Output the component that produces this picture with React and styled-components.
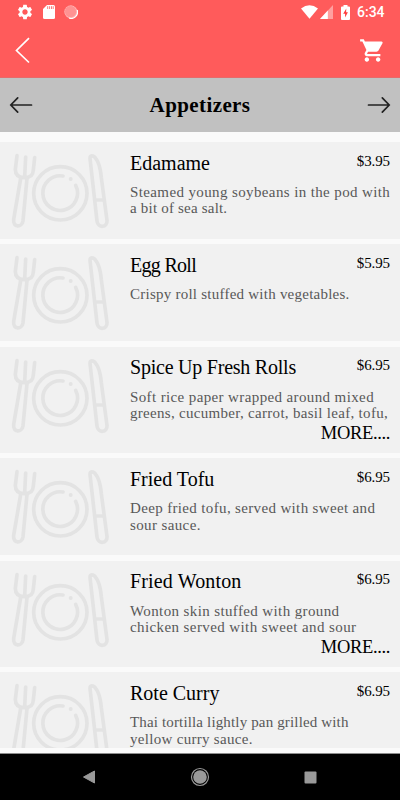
import styled, { createGlobalStyle } from 'styled-components';
import { MdSettings, MdShoppingCart } from 'react-icons/md';

const GlobalStyle = createGlobalStyle`
  * {
    box-sizing: border-box;
  }

  body {
    margin: 0;
    background: #fafafa;
    font-family: 'Liberation Serif', serif;
    color: #000;
  }
`;

const Screen = styled.div`
  display: flex;
  flex-direction: column;
  width: 400px;
  height: 800px;
  overflow: hidden;
`;

const Header = styled.header`
  display: flex;
  flex-direction: column;
  height: 78px;
  background-color: #ff5b5b;
  color: #fff;
  border-bottom: 1px solid #e66a6a;
`;

const StatusBar = styled.div`
  display: flex;
  justify-content: space-between;
  height: 24px;
  padding: 0 16px;
`;

const StatusGroup = styled.div`
  display: flex;
  align-items: center;
  gap: ${(props) => props.$gap}px;
`;

const Clock = styled.span`
  width: 27px;
  margin-left: -1px;
  font-family: Roboto, sans-serif;
  font-size: 14px;
  font-weight: 500;
  line-height: 24px;
  white-space: nowrap;
`;

const Toolbar = styled.div`
  display: flex;
  justify-content: space-between;
  align-items: center;
  padding: 12px 14px 0 14px;
`;

const IconButton = styled.button`
  display: flex;
  padding: 0;
  border: 0;
  background: none;
  color: inherit;
`;

const CategoryBar = styled.div`
  display: flex;
  justify-content: space-between;
  align-items: center;
  height: 54px;
  flex: none;
  padding: 0 9px;
  background-color: #c1c1c1;
`;

const Category = styled.h1`
  margin: 0;
  font-size: 21px;
  font-weight: bold;
  line-height: 28px;
  letter-spacing: 0.4px;
  white-space: nowrap;
`;

const List = styled.main`
  display: flex;
  flex-direction: column;
  gap: 5.2px;
  height: 606px;
  flex: none;
  margin: 10px 0 5px;
  overflow: hidden;
`;

const Card = styled.article`
  display: flex;
  flex: none;
  height: ${(props) => (props.$tall ? 106.6 : 97.1)}px;
  background-color: #f1f1f1;
`;

const Details = styled.div`
  display: flex;
  flex-direction: column;
  width: 260px;
  padding-top: 8.6px;
`;

const TitleRow = styled.div`
  display: flex;
  justify-content: space-between;
  height: 33.4px;
`;

const Title = styled.h2`
  margin: 0;
  font-size: 20px;
  font-weight: normal;
  line-height: 24px;
  letter-spacing: ${(props) => props.$spacing}px;
  white-space: nowrap;
`;

const Price = styled.span`
  font-size: 15px;
  line-height: 20px;
  letter-spacing: -0.1px;
`;

const Line = styled.span`
  height: 16.3px;
  font-size: 15px;
  line-height: 17px;
  letter-spacing: ${(props) => props.$spacing}px;
  color: #585858;
  white-space: nowrap;
`;

const More = styled.span`
  align-self: flex-end;
  font-size: 18.5px;
  line-height: 24px;
  letter-spacing: -0.35px;
`;

const NavBar = styled.nav`
  display: flex;
  justify-content: space-between;
  align-items: center;
  height: 47px;
  flex: none;
  padding: 0 83px 0 82px;
  border-top: 1px solid #8c8c8c;
  background-color: #000;
`;

const PlateArt = () => (
  <svg
    width="130"
    height="97"
    viewBox="0 0 390 291"
    fill="none"
    stroke="#e3e3e3"
    strokeWidth="11"
    strokeLinecap="round"
    strokeLinejoin="round"
  >
    <path d="M51 41L46 82Q46 106 72 107Q99 108 100 84L104 47M77 45L74 105" />
    <path d="M62 109L41 232C38 257 66 258 69 236L81 109" />
    <circle cx="181" cy="154" r="80" />
    <path d="M189 102A52 52 0 1 0 227 130" />
    <circle cx="212" cy="111" r="6" fill="#e3e3e3" stroke="none" />
    <path d="M270 49C270 39 279 40 285 46C299 62 302 82 304 107L321 235C323 257 294 260 291 237ZM287 174L312 174" />
  </svg>
);

const SdCard = () => (
  <svg width="12" height="14" viewBox="0 0 12 14">
    <path d="M4 0H10.5Q12 0 12 1.5V12.5Q12 14 10.5 14H1.5Q0 14 0 12.5V4Z" fill="#fff" />
    <path d="M4.7 1.2V4M6.6 1.2V4M8.5 1.2V4M10.2 1.2V4" stroke="#ff7c7c" strokeWidth="1" />
  </svg>
);

const Sync = () => (
  <svg width="14" height="14" viewBox="0 0 14 14">
    <circle cx="7" cy="7" r="6.5" fill="#ffadad" />
    <circle cx="6.6" cy="6.6" r="5.9" fill="#ff9292" stroke="#ffc4c4" strokeWidth=".7" strokeDasharray="1 1" />
    <path d="M13.2 5A6.4 6.4 0 0 1 5 13.1" fill="none" stroke="#fff" strokeWidth="1.1" />
  </svg>
);

const Wifi = () => (
  <svg width="17" height="14" viewBox="0 0 17 14">
    <path d="M0 3.4Q8.5 -2.8 17 3.4L8.5 13.8Z" fill="#fff" />
  </svg>
);

const Signal = () => (
  <svg width="13" height="14" viewBox="0 0 13 14">
    <path d="M0 14L13 0V14Z" fill="#ffa0a0" />
    <path d="M0 14L7.8 5.6V14Z" fill="#fff" />
  </svg>
);

const Battery = () => (
  <svg width="9" height="15" viewBox="0 0 9 15">
    <path d="M2.5 0H6.5V1.5H8Q9 1.5 9 2.5V14Q9 15 8 15H1Q0 15 0 14V2.5Q0 1.5 1 1.5H2.5Z" fill="#fff" />
    <path d="M5.3 3.5L2.2 8.8H4.1V12.5L6.9 7.2H5.1Z" fill="#ff3b3b" />
  </svg>
);

const BackIcon = () => (
  <svg width="17" height="28" viewBox="0 0 17 28" fill="none" stroke="#fff" strokeWidth="1.7">
    <path d="M15 2.2L2.5 14.5L15 26.5" />
  </svg>
);

const Arrow = ({ right }) => (
  <svg
    width="24"
    height="18"
    viewBox="0 0 24 18"
    fill="none"
    stroke="#222"
    strokeWidth="1.7"
    strokeLinecap="round"
    transform={right ? 'scale(-1 1)' : undefined}
  >
    <path d="M8.7 1.8L1.8 9L8.7 16.2M2 9H22.5" />
  </svg>
);

// each line holds its text and letter spacing
const items = [
  {
    title: 'Edamame',
    price: '$3.95',
    lines: [
      ['Steamed young soybeans in the pod with', 0.38],
      ['a bit of sea salt.', 0.2],
    ],
  },
  {
    title: 'Egg Roll',
    spacing: -0.7,
    price: '$5.95',
    lines: [['Crispy roll stuffed with vegetables.', 0.24]],
  },
  {
    title: 'Spice Up Fresh Rolls',
    spacing: -0.23,
    price: '$6.95',
    lines: [
      ['Soft rice paper wrapped around mixed', 0.38],
      ['greens, cucumber, carrot, basil leaf, tofu,', 0.3],
    ],
    more: true,
  },
  {
    title: 'Fried Tofu',
    price: '$6.95',
    lines: [
      ['Deep fried tofu, served with sweet and', 0.35],
      ['sour sauce.', 0.38],
    ],
  },
  {
    title: 'Fried Wonton',
    spacing: 0.15,
    price: '$6.95',
    lines: [
      ['Wonton skin stuffed with ground', 0.38],
      ['chicken served with sweet and sour', 0.4],
    ],
    more: true,
  },
  {
    title: 'Rote Curry',
    price: '$6.95',
    lines: [
      ['Thai tortilla lightly pan grilled with', 0.15],
      ['yellow curry sauce.', 0.3],
    ],
  },
];

const MenuItem = ({ item }) => (
  <Card $tall={item.more}>
    <PlateArt />
    <Details>
      <TitleRow>
        <Title $spacing={item.spacing || 0}>{item.title}</Title>
        <Price>{item.price}</Price>
      </TitleRow>
      {item.lines.map(([text, spacing]) => (
        <Line key={text} $spacing={spacing}>{text}</Line>
      ))}
      {item.more && <More>MORE....</More>}
    </Details>
  </Card>
);

const App = () => {
  return (
    <Screen>
      <GlobalStyle />
      <Header>
        <StatusBar>
          <StatusGroup $gap={9}>
            <MdSettings size={18} />
            <SdCard />
            <Sync />
          </StatusGroup>
          <StatusGroup $gap={8}>
            <StatusGroup $gap={2}>
              <Wifi />
              <Signal />
            </StatusGroup>
            <Battery />
            <Clock>6:34</Clock>
          </StatusGroup>
        </StatusBar>
        <Toolbar>
          <IconButton aria-label="Back"><BackIcon /></IconButton>
          <IconButton aria-label="Cart"><MdShoppingCart size={27} /></IconButton>
        </Toolbar>
      </Header>
      <CategoryBar>
        <IconButton aria-label="Previous category"><Arrow /></IconButton>
        <Category>Appetizers</Category>
        <IconButton aria-label="Next category"><Arrow right /></IconButton>
      </CategoryBar>
      <List>
        {items.map((item) => (
          <MenuItem key={item.title} item={item} />
        ))}
      </List>
      <NavBar>
        <svg width="14" height="14" viewBox="0 0 14 14">
          <path d="M1.5 7L12.5 1V13Z" fill="#999" stroke="#999" strokeLinejoin="round" />
        </svg>
        <svg width="20" height="20" viewBox="0 0 20 20">
          <circle cx="10" cy="10" r="8.5" fill="none" stroke="#999" strokeWidth="1.2" />
          <circle cx="10" cy="10" r="6.8" fill="#999" />
        </svg>
        <svg width="13" height="13" viewBox="0 0 13 13">
          <rect x=".5" y=".5" width="12" height="12" rx="1" fill="#999" />
        </svg>
      </NavBar>
    </Screen>
  );
};

export default App;
